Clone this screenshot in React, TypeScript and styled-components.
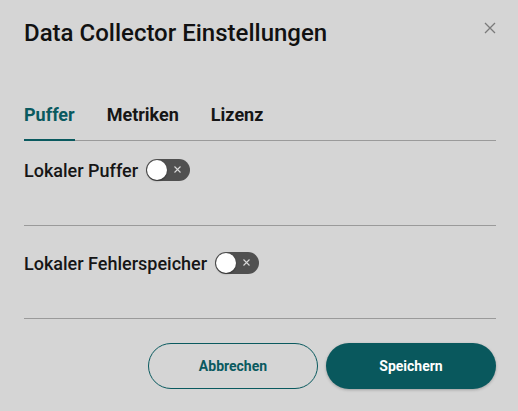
import { createGlobalStyle, styled } from "styled-components";

const GlobalStyle = createGlobalStyle`
    html, body {
        margin: 0;
        padding: 0;
        background: #d5d5d5;
    }
    body {
        font-family: Roboto, "Liberation Sans", sans-serif;
        color: #111;
    }
`;

const tabs = ["Puffer", "Metriken", "Lizenz"];

function Toggle() {
    return (
        <ToggleStyle>
            <span className="knob" />
            <svg className="mark" width="7" height="7" viewBox="0 0 7 7">
                <path d="M0.5 0.5 L6.5 6.5 M6.5 0.5 L0.5 6.5" stroke="#d9d9d9" strokeWidth="1.1" />
            </svg>
        </ToggleStyle>
    );
}

function App() {
    return (
        <>
            <GlobalStyle />
            <DialogStyle>
                {/* header */}
                <HeaderStyle>
                    <h1>Data Collector Einstellungen</h1>
                    <CloseButton aria-label="close">
                        <svg width="12" height="12" viewBox="0 0 12 12">
                            <path d="M1 1 L11 11 M11 1 L1 11" stroke="#7a7a7a" strokeWidth="1.3" />
                        </svg>
                    </CloseButton>
                </HeaderStyle>

                {/* tabs */}
                <TabsStyle>
                    {tabs.map((tab, index) => (
                        <TabStyle key={tab} $active={index === 0}>
                            {tab}
                        </TabStyle>
                    ))}
                </TabsStyle>

                {/* settings */}
                <SectionStyle $top={18}>
                    <label>Lokaler Puffer</label>
                    <Toggle />
                </SectionStyle>
                <SectionStyle $top={26}>
                    <label>Lokaler Fehlerspeicher</label>
                    <Toggle />
                </SectionStyle>

                {/* buttons */}
                <FooterStyle>
                    <ButtonStyle className="outline">Abbrechen</ButtonStyle>
                    <ButtonStyle className="filled">Speichern</ButtonStyle>
                </FooterStyle>
            </DialogStyle>
        </>
    );
}

const DialogStyle = styled.div`
    width: 518px;
    height: 411px;
    box-sizing: border-box;
    padding: 0 22px 0 24px;
`;

const HeaderStyle = styled.div`
    display: flex;
    justify-content: space-between;
    align-items: flex-start;
    padding-top: 18px;
    height: 95px;
    box-sizing: border-box;

    h1 {
        margin: 0;
        font-size: 24px;
        font-weight: 500;
        line-height: 30px;
        color: #111;
    }
`;

const CloseButton = styled.button`
    border: 0;
    background: none;
    padding: 0;
    margin: 3px -1px 0 0;
    width: 14px;
    height: 14px;
    display: flex;
    align-items: center;
    justify-content: center;
    cursor: pointer;
`;

const TabsStyle = styled.div`
    display: flex;
    gap: 32px;
    border-bottom: 1px solid #9a9a9a;
`;

interface TabStyleProps {
    $active: boolean;
}

const TabStyle = styled.div<TabStyleProps>`
    font-size: 18px;
    font-weight: 700;
    line-height: 22px;
    padding: 9px 0 13px;
    margin-bottom: -1px;
    color: ${(props) => (props.$active ? "#0a5a5f" : "#161616")};
    border-bottom: 2px solid ${(props) => (props.$active ? "#0a5a5f" : "transparent")};
`;

interface SectionStyleProps {
    $top: number;
}

const SectionStyle = styled.div<SectionStyleProps>`
    display: flex;
    align-items: center;
    gap: 8px;
    padding: ${(props) => props.$top}px 0 44px;
    border-bottom: 1px solid #9a9a9a;

    label {
        font-size: 18px;
        font-weight: 500;
        color: #161616;
    }
`;

const ToggleStyle = styled.span`
    position: relative;
    width: 44px;
    height: 22px;
    border-radius: 11px;
    background: #505050;
    display: inline-block;

    .knob {
        position: absolute;
        left: 1px;
        top: 1px;
        width: 20px;
        height: 20px;
        border-radius: 50%;
        background: #fff;
        box-shadow: 0 1px 2px rgba(0, 0, 0, 0.4);
    }

    .mark {
        position: absolute;
        right: 9px;
        top: 7px;
    }
`;

const FooterStyle = styled.div`
    display: flex;
    justify-content: flex-end;
    gap: 8px;
    padding-top: 24px;
`;

const ButtonStyle = styled.button`
    width: 170px;
    height: 46px;
    border-radius: 23px;
    font-family: Roboto, "Liberation Sans", sans-serif;
    font-size: 14px;
    font-weight: 700;
    cursor: pointer;
    box-sizing: border-box;

    &.outline {
        background: transparent;
        border: 1px solid #0a5a5f;
        color: #0a5a5f;
    }

    &.filled {
        background: #09585d;
        border: 0;
        color: #fff;
        box-shadow: 0 1px 3px rgba(0, 0, 0, 0.25);
    }
`;

export default App;
